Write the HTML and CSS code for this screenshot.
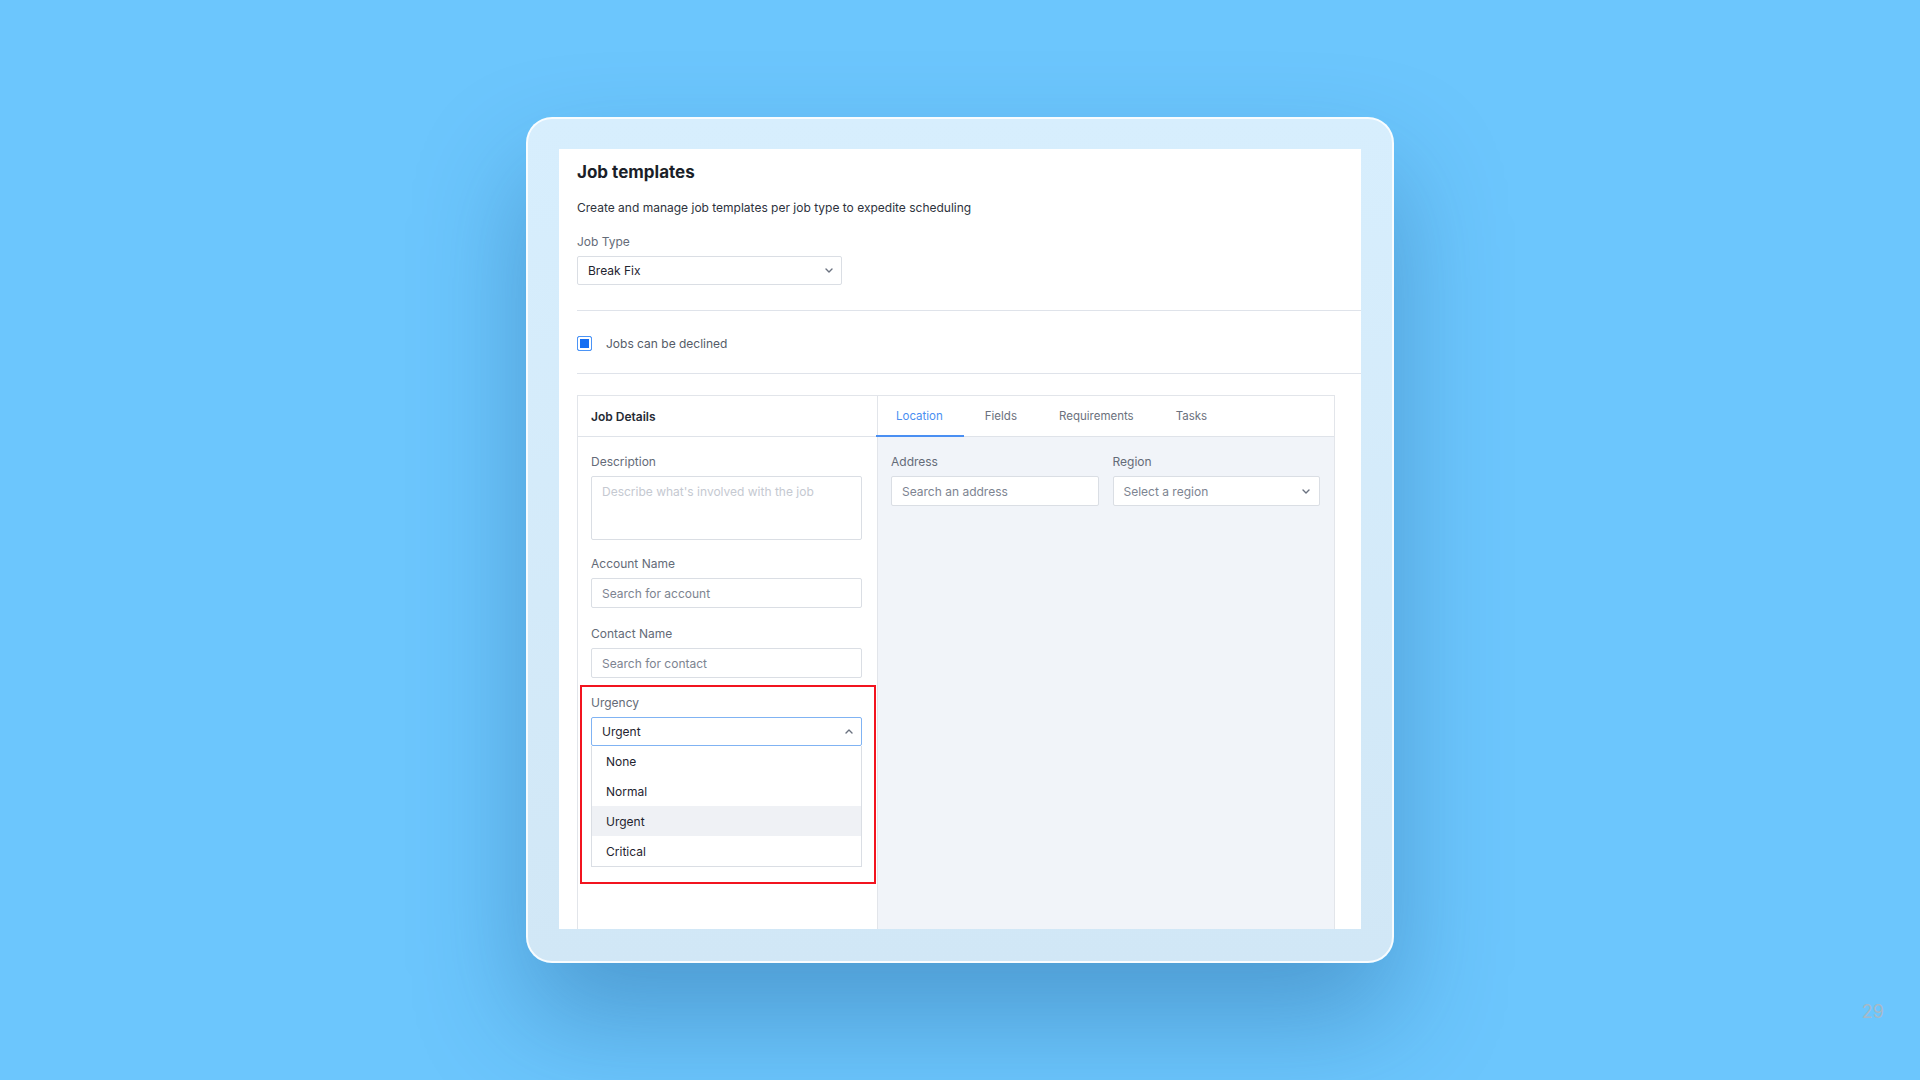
FILE: index.html
```html
<!DOCTYPE html>
<html lang="en">
<head>
<meta charset="utf-8">
<title>Job templates</title>
<link rel="stylesheet" href="styles.css">
</head>
<body>
  <div class="device">
    <main class="panel">
      <h1 class="title">Job templates</h1>
      <p class="subtitle">Create and manage job templates per job type to expedite scheduling</p>

      <div class="label">Job Type</div>
      <div class="select select-jobtype">
        <span>Break Fix</span>
        <svg class="chev" width="8" height="5" viewBox="0 0 8 5"><polyline points="1,1 4,4 7,1" /></svg>
      </div>

      <div class="check-row">
        <span class="checkbox"></span>
        <span class="check-label">Jobs can be declined</span>
      </div>

      <section class="card">
        <div class="card-head">
          <div class="head-left">Job Details</div>
          <nav class="tabs">
            <span class="tab active">Location</span>
            <span class="tab">Fields</span>
            <span class="tab">Requirements</span>
            <span class="tab">Tasks</span>
          </nav>
        </div>
        <div class="card-body">
          <div class="col-left">
            <div class="label">Description</div>
            <div class="input textarea placeholder-light">Describe what's involved with the job</div>

            <div class="label gap">Account Name</div>
            <div class="input placeholder">Search for account</div>

            <div class="label gap2">Contact Name</div>
            <div class="input placeholder">Search for contact</div>

            <div class="highlight">
              <div class="label">Urgency</div>
              <div class="select select-open">
                <span>Urgent</span>
                <svg class="chev" width="8" height="5" viewBox="0 0 8 5"><polyline points="1,4 4,1 7,4" /></svg>
              </div>
              <ul class="options">
                <li>None</li>
                <li>Normal</li>
                <li class="hover">Urgent</li>
                <li>Critical</li>
              </ul>
            </div>
          </div>
          <div class="col-right">
            <div class="row2">
              <div class="field">
                <div class="label">Address</div>
                <div class="input placeholder">Search an address</div>
              </div>
              <div class="field">
                <div class="label">Region</div>
                <div class="select placeholder region">
                  <span>Select a region</span>
                  <svg class="chev" width="8" height="5" viewBox="0 0 8 5"><polyline points="1,1 4,4 7,1" /></svg>
                </div>
              </div>
            </div>
          </div>
        </div>
      </section>
    </main>
  </div>
  <div class="page-num">29</div>
</body>
</html>
```

FILE: styles.css
```css
* { box-sizing: border-box; }

html, body { margin: 0; padding: 0; }

body {
  width: 1920px;
  height: 1080px;
  overflow: hidden;
  position: relative;
  background: #6cc6fd;
  font-family: Inter, "Noto Sans", sans-serif;
  display: flex;
  align-items: center;
  justify-content: center;
}

/* tablet-like frame around the app */
.device {
  width: 868px;
  height: 846px;
  border-radius: 26px;
  border: 2px solid rgba(255, 255, 255, 0.85);
  background: linear-gradient(180deg, #d7eefd 0%, #d1e7f6 100%);
  padding: 30px 31px 32px 31px;
  box-shadow: 0 55px 110px 0 rgba(25, 85, 140, 0.38);
}

.panel {
  background: #fff;
  height: 100%;
  padding: 11px 18px 0;
  overflow: hidden;
}

.title {
  margin: 0;
  font-size: 17px;
  line-height: 24px;
  font-weight: 700;
  color: #1b1f29;
}

.subtitle {
  margin: 15px 0 0;
  font-size: 12px;
  line-height: 18px;
  color: #2e333d;
}

.label {
  font-size: 12px;
  line-height: 16px;
  color: #646b78;
}

.panel > .label { margin-top: 17px; }

.select,
.input {
  display: flex;
  align-items: center;
  justify-content: space-between;
  margin-top: 6px;
  height: 30px;
  border: 1px solid #dadee4;
  border-radius: 2px;
  background: #fff;
  font-size: 12px;
  color: #1f2430;
}

.select { padding: 0 8px 0 10px; }
.input { padding: 0 10px; }

.select-jobtype {
  width: 265px;
  height: 29px;
}

.chev {
  fill: none;
  stroke: #6b7280;
  stroke-width: 1.4;
  stroke-linecap: round;
  stroke-linejoin: round;
}

.placeholder { color: #7d8491; }
.placeholder-light { color: #c5c9d1; }

.check-row {
  margin: 25px -18px 0 0;
  height: 64px;
  padding-top: 2px;
  border-top: 1px solid #dfe3ea;
  border-bottom: 1px solid #dfe3ea;
  display: flex;
  align-items: center;
  gap: 14px;
}

.checkbox {
  width: 15px;
  height: 15px;
  border: 1.5px solid #4b94f6;
  border-radius: 2px;
  background: #156ef2;
  box-shadow: inset 0 0 0 2px #fff;
}

.check-label {
  font-size: 12px;
  color: #555c68;
}

/* job details card */
.card {
  margin-top: 21px;
  width: 758px;
  height: 620px;
  border: 1px solid #e2e5ea;
  border-bottom: none;
  display: flex;
  flex-direction: column;
}

.card-head {
  display: grid;
  grid-template-columns: 300px 1fr;
  height: 41px;
  border-bottom: 1px solid #dfe3e9;
}

.head-left {
  border-right: 1px solid #e2e5ea;
  padding-left: 13px;
  display: flex;
  align-items: center;
  font-size: 12px;
  font-weight: 600;
  color: #262b35;
}

.tabs {
  display: flex;
  align-items: stretch;
}

.tab {
  display: flex;
  align-items: center;
  padding: 0 21px;
  font-size: 11.5px;
  color: #6b717d;
  border-bottom: 2px solid transparent;
  margin-bottom: -1px;
}

.tab.active {
  color: #4a8ff2;
  border-bottom-color: #4a8ff2;
  padding: 0 21px 0 20px;
  margin-left: -2px;
}

.card-body {
  flex: 1;
  display: grid;
  grid-template-columns: 300px 1fr;
}

.col-left {
  border-right: 1px solid #e2e5ea;
  padding: 17px 15px 0 13px;
}

.textarea {
  height: 64px;
  align-items: flex-start;
  padding: 7px 10px;
}

.col-left .input { padding: 0 10px; }
.col-left .textarea { padding: 7px 10px; }

.label.gap { margin-top: 16px; }
.label.gap2 { margin-top: 18px; }

/* red annotation frame round the open urgency menu */
.highlight {
  margin: 7px -14px 0 -11px;
  border: 2px solid #f2141f;
  padding: 8px 12px 15px 9px;
}

.select-open {
  height: 29px;
  border-color: #80b3f3;
}

.options {
  list-style: none;
  margin: 0;
  padding: 0;
  border: 1px solid #dadee4;
  border-top: none;
}

.options li {
  height: 30px;
  padding-left: 14px;
  display: flex;
  align-items: center;
  font-size: 12px;
  color: #1f2430;
}

.options li.hover { background: #eff1f5; }

.col-right {
  background: #f1f4f9;
  padding: 17px 14px 0 13px;
}

.row2 {
  display: grid;
  grid-template-columns: 1fr 1fr;
  gap: 14px;
}

.field .input,
.field .select { height: 30px; }

.region { padding-right: 9px; }

.page-num {
  position: absolute;
  right: 36px;
  top: 1001px;
  font-size: 18px;
  color: #a7b9c7;
}
```
